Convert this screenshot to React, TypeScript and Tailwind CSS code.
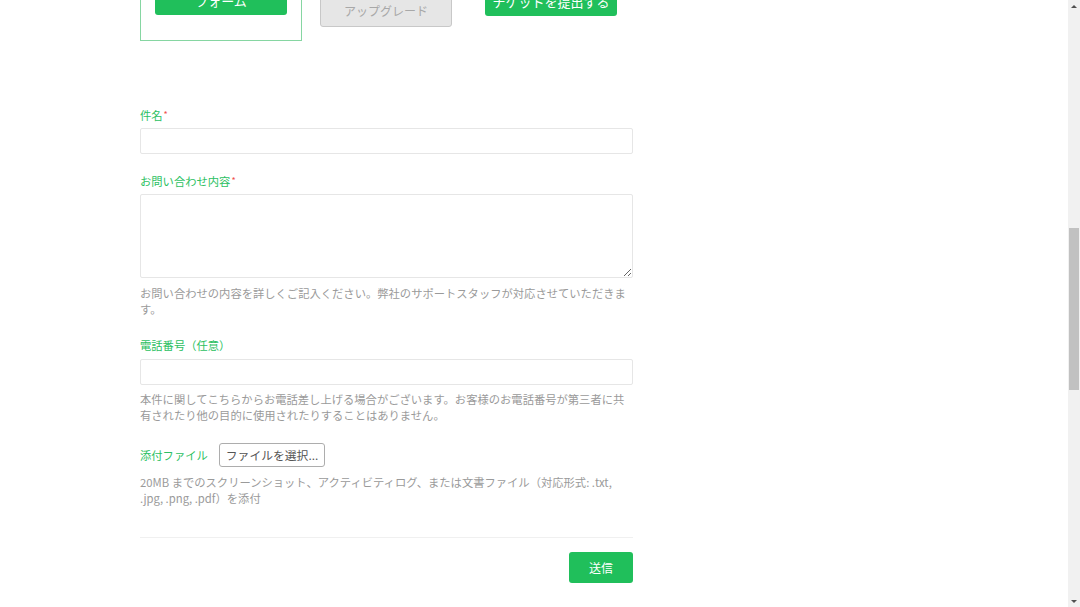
import React from 'react'

const font = { fontFamily: '"Noto Sans CJK JP", "Noto Sans", sans-serif' }

const Label = ({ text, required }: { text: string; required?: boolean }) => (
  <div className="text-[11.3px] leading-[16px] text-[#2cbf62] mb-[5px]">
    {text}
    {required && <span className="text-[#f0504a] text-[9px] align-top ml-[1px]">*</span>}
  </div>
)

const Help = ({ children, className = '' }: { children: React.ReactNode; className?: string }) => (
  <p className={`text-[11.3px] leading-[16px] text-[#9a9a9a] ${className}`}>{children}</p>
)

const Scrollbar = () => (
  <div className="w-[12px] h-full bg-[#f1f1f1] flex flex-col items-center">
    <div className="h-[12px] flex items-center justify-center">
      <div className="w-0 h-0 border-l-[3px] border-r-[3px] border-b-[3px] border-l-transparent border-r-transparent border-b-[#505050]" />
    </div>
    <div className="flex-1 w-full relative">
      <div className="absolute left-[1px] right-[1px] top-[216px] h-[162px] bg-[#c1c1c1]" />
    </div>
    <div className="h-[12px] flex items-center justify-center">
      <div className="w-0 h-0 border-l-[3px] border-r-[3px] border-t-[3px] border-l-transparent border-r-transparent border-t-[#505050]" />
    </div>
  </div>
)

export default function App() {
  return (
    <div className="w-[1080px] h-[607px] flex bg-white overflow-hidden" style={font}>
      <div className="flex-1 pl-[140px]">
        <div className="w-[493px]">
          {/* plan cards, scrolled partly out of view */}
          <div className="flex gap-[3px] mt-[-60px]">
            <div className="w-[162px] h-[101px] border border-[#86d6a2] flex flex-col items-center justify-end pb-[25px]">
              <button className="w-[132px] h-[32px] rounded-[3px] bg-[#20bf5b] text-white text-[13px] pt-[4px]">フォーム</button>
            </div>
            <div className="w-[162px] h-[101px] border border-transparent flex flex-col items-center justify-end pb-[13px]">
              <button className="w-[132px] h-[32px] rounded-[3px] bg-[#e6e6e6] border border-[#c8c8c8] text-[#a8a8a8] text-[12px]">アップグレード</button>
            </div>
            <div className="w-[162px] h-[101px] border border-transparent flex flex-col items-center justify-end pb-[24px]">
              <button className="w-[132px] h-[32px] rounded-[3px] bg-[#20bf5b] text-white text-[13px] pt-[4px]">チケットを提出する</button>
            </div>
          </div>

          <form className="mt-[66px]">
            <Label text="件名" required />
            <input className="block w-full h-[26px] border border-[#e6e6e6] rounded-[2px] outline-none" />

            <div className="mt-[19px]">
              <Label text="お問い合わせ内容" required />
              <textarea className="block w-full h-[84px] border border-[#e6e6e6] rounded-[2px] outline-none" />
            </div>
            <Help className="mt-[7px]">
              お問い合わせの内容を詳しくご記入ください。弊社のサポートスタッフが対応させていただきま<br />す。
            </Help>

            <div className="mt-[20px]">
              <Label text="電話番号（任意）" />
              <div className="h-px" />
              <input className="block w-full h-[26px] border border-[#e6e6e6] rounded-[2px] outline-none" />
            </div>
            <Help className="mt-[6px]">
              本件に関してこちらからお電話差し上げる場合がございます。お客様のお電話番号が第三者に共<br />
              有されたり他の目的に使用されたりすることはありません。
            </Help>

            <div className="mt-[20px] flex items-center gap-[11px]">
              <span className="text-[11.3px] leading-[16px] text-[#2cbf62]">添付ファイル</span>
              <button type="button" className="h-[24px] px-[6px] border border-[#adadad] rounded-[3px] bg-white text-[11.8px] text-[#555]">
                ファイルを選択...
              </button>
            </div>
            <Help className="mt-[7px]">
              20MB までのスクリーンショット、アクティビティログ、または文書ファイル（対応形式: .txt,<br />
              .jpg, .png, .pdf）を添付
            </Help>

            <div className="mt-[31px] h-px bg-[#f0f0f0]" />
            <div className="mt-[14px] flex justify-end">
              <button type="button" className="w-[64px] h-[31px] rounded-[3px] bg-[#20bf5b] text-white text-[12px]">送信</button>
            </div>
          </form>
        </div>
      </div>
      <Scrollbar />
    </div>
  )
}
